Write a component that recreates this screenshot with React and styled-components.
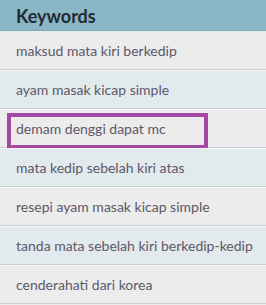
import React from "react";
import styled, { createGlobalStyle } from "styled-components";

const Global = createGlobalStyle`
  html, body { margin: 0; padding: 0; background: #ececec; }
  body { font-family: Lato, "Open Sans", sans-serif; }
`;

const Panel = styled.div`
  width: 266px;
  height: 305px;
  overflow: hidden;
  background: #ececec;
`;

const Header = styled.div`
  height: 31px;
  box-sizing: border-box;
  padding: 1px 16px 0;
  display: flex;
  align-items: center;
  background: #8ab6c6;
  border-bottom: 1px solid #7fa9b8;
  font-size: 18px;
  font-weight: 700;
  color: #1f2b31;
`;

const List = styled.div`
  display: flex;
  flex-direction: column;
`;

const Row = styled.div`
  position: relative;
  height: 39px;
  box-sizing: border-box;
  display: flex;
  align-items: center;
  padding: 0 16px;
  background: ${(p) => (p.$alt ? "#e2eaed" : "#ececec")};
  border-top: 1px solid ${(p) => (p.$first ? "transparent" : "#f7f8f8")};
  border-bottom: 1px solid #cdd1d3;
  font-size: 14px;
  color: #5d5869;
  white-space: nowrap;
`;

const Mark = styled.div`
  position: absolute;
  left: 7px;
  top: 3px;
  width: 201px;
  height: 36px;
  box-sizing: border-box;
  border: 4px solid #a349a4;
  pointer-events: none;
`;

const items = [
  "maksud mata kiri berkedip",
  "ayam masak kicap simple",
  "demam denggi dapat mc",
  "mata kedip sebelah kiri atas",
  "resepi ayam masak kicap simple",
  "tanda mata sebelah kiri berkedip-kedip",
  "cenderahati dari korea",
];

export default function App() {
  return (
    <Panel>
      <Global />
      <Header>Keywords</Header>
      <List>
        {items.map((t, i) => (
          <Row key={t} $alt={i % 2 === 1} $first={i === 0}>
            {t}
            {i === 2 && <Mark />}
          </Row>
        ))}
      </List>
    </Panel>
  );
}
